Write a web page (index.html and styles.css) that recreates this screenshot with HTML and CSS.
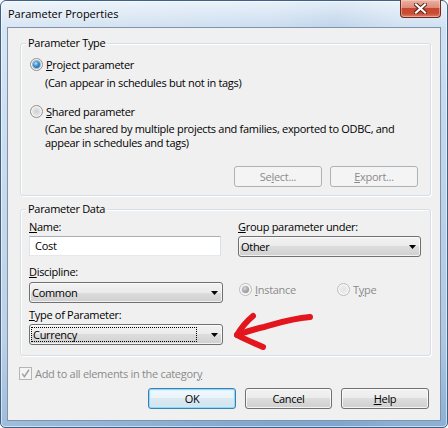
FILE: index.html
```html
<!DOCTYPE html>
<html lang="en">
<head>
<meta charset="utf-8">
<title>Parameter Properties</title>
<link rel="stylesheet" href="styles.css">
</head>
<body>
<div class="window">
  <div class="titlebar">
    <span class="title">Parameter Properties</span>
    <div class="close">
      <svg width="13" height="11" viewBox="0 0 13 11">
        <path d="M2 1.5 L11 9.5 M11 1.5 L2 9.5" stroke="#5a1d14" stroke-width="4" stroke-linecap="square"/>
        <path d="M2 1.5 L11 9.5 M11 1.5 L2 9.5" stroke="#ffffff" stroke-width="2.2" stroke-linecap="square"/>
      </svg>
    </div>
  </div>
  <div class="client">
    <div class="group g1">
      <div class="legend">Parameter Type</div>
      <div class="opt-row first">
        <span class="radio checked"></span><span><u>P</u>roject parameter</span>
      </div>
      <div class="note n1">(Can appear in schedules but not in tags)</div>
      <div class="opt-row second">
        <span class="radio"></span><span><u>S</u>hared parameter</span>
      </div>
      <div class="note n2">(Can be shared by multiple projects and families, exported to ODBC, and<br>appear in schedules and tags)</div>
      <div class="btn-row">
        <button class="btn" disabled>Se<u>l</u>ect...</button>
        <button class="btn" disabled><u>E</u>xport...</button>
      </div>
    </div>

    <div class="group g2">
      <div class="legend">Parameter Data</div>
      <div class="field-row r1">
        <div class="field">
          <div class="lbl"><u>N</u>ame:</div>
          <div class="input">Cost</div>
        </div>
        <div class="field right">
          <div class="lbl"><u>G</u>roup parameter under:</div>
          <div class="combo"><span class="combo-text">Other</span><svg class="drop" width="7" height="4" viewBox="0 0 7 4"><path d="M0 0H7L3.5 4Z" fill="#000"/></svg></div>
        </div>
      </div>
      <div class="field-row r2">
        <div class="field">
          <div class="lbl lbl2"><u>D</u>iscipline:</div>
          <div class="combo"><span class="combo-text">Common</span><svg class="drop" width="7" height="4" viewBox="0 0 7 4"><path d="M0 0H7L3.5 4Z" fill="#000"/></svg></div>
        </div>
        <div class="field right radios">
          <div class="dis-opt inst"><span class="radio disabled checked"></span><span><u>I</u>nstance</span></div>
          <div class="dis-opt"><span class="radio disabled"></span><span>T<u>y</u>pe</span></div>
        </div>
      </div>
      <div class="field-row r3">
        <div class="field">
          <div class="lbl"><u>T</u>ype of Parameter:</div>
          <div class="combo focused"><span class="combo-text focus">Currency</span><svg class="drop" width="7" height="4" viewBox="0 0 7 4"><path d="M0 0H7L3.5 4Z" fill="#000"/></svg></div>
        </div>
      </div>
    </div>

    <div class="check-row">
      <span class="checkbox"><svg width="11" height="11" viewBox="0 0 11 11"><path d="M2.2 5.6 L4.4 8.6 L9 1.8" fill="none" stroke="#a4a4a4" stroke-width="1.6"/></svg></span>
      <span>Add to all elements in the categor<u>y</u></span>
    </div>

    <div class="actions">
      <button class="btn default">OK</button>
      <button class="btn">Cancel</button>
      <button class="btn"><u>H</u>elp</button>
    </div>

    <svg class="annot" width="90" height="46" viewBox="0 0 90 46">
      <path d="M7 26 C 16 23, 24 20, 34 18 C 46 15, 58 10, 80 8" fill="none" stroke="#e3161d" stroke-width="6" stroke-linecap="round" stroke-linejoin="round"/>
      <path d="M23 7 C 17 12, 11 19, 7 26 C 14 30, 24 34, 33 38" fill="none" stroke="#e3161d" stroke-width="6" stroke-linecap="round" stroke-linejoin="round"/>
    </svg>
  </div>
</div>
</body>
</html>
```

FILE: styles.css
```css
* { box-sizing: border-box; }

html, body {
  margin: 0;
  padding: 0;
}

body {
  width: 448px;
  height: 428px;
  overflow: hidden;
  font-family: "Open Sans", "Noto Sans", sans-serif;
  font-size: 11px;
  letter-spacing: -0.3px;
  color: #000;
  background: #ffffff;
}

.window {
  width: 448px;
  height: 428px;
  border: 1px solid #3f6187;
  border-radius: 6px 6px 5px 5px;
  padding: 0 6px 6px;
  display: flex;
  flex-direction: column;
  background:
    linear-gradient(180deg, rgba(255,255,255,0.55) 0, rgba(255,255,255,0) 27px),
    linear-gradient(90deg, rgba(255,255,255,0.25) 0, rgba(255,255,255,0) 60%, rgba(120,160,210,0.15) 75%, rgba(255,255,255,0.1) 90%),
    linear-gradient(180deg, #cfe0f1 0%, #bcd3ea 30%, #a5c1de 80%, #7ea6cf 100%);
  box-shadow: inset 0 0 0 1px rgba(255,255,255,0.55);
}

.titlebar {
  height: 26px;
  flex: none;
  display: flex;
  align-items: flex-start;
  justify-content: space-between;
}

.title {
  margin-top: 6px;
  padding-left: 1px;
  line-height: 14px;
  font-size: 11px;
  letter-spacing: 0;
  text-shadow: 0 0 6px rgba(255,255,255,0.9);
}

.close {
  width: 41px;
  height: 18px;
  margin-top: -1px;
  border: 1px solid #6b2a20;
  border-top: none;
  border-radius: 0 0 4px 4px;
  display: flex;
  align-items: center;
  justify-content: center;
  background: linear-gradient(180deg, #eab2a5 0%, #de8b78 45%, #c8452e 50%, #c94f36 80%, #de8266 100%);
  box-shadow: inset 0 0 0 1px rgba(255,220,210,0.45);
}

.client {
  flex: 1;
  position: relative;
  border: 1px solid #8193ab;
  background: #f0f0f0;
  padding: 0 9px 0 12px;
  display: flex;
  flex-direction: column;
}

.group {
  border: 1px solid #d5dfe5;
  border-radius: 3px;
  box-shadow: inset 1px 1px 0 #fff, 1px 1px 0 #fff;
  display: flex;
  flex-direction: column;
}

.legend {
  align-self: flex-start;
  background: #f0f0f0;
  line-height: 14px;
  padding: 0 2px;
  margin-top: -8px;
}

.g1 {
  margin-top: 15px;
  padding: 0 12px 8px 9px;
}

.g1 .legend { margin-left: -4px; }

.opt-row {
  display: flex;
  align-items: center;
  height: 16px;
}

.opt-row.first { margin-top: 6px; }
.opt-row.second { margin-top: 13px; }

.opt-row .radio { margin-right: 3px; }

.note {
  line-height: 14px;
  padding-left: 15px;
}

.n1 { margin-top: 4px; }
.n2 { margin-top: 3px; }

.btn-row {
  margin-top: 16px;
  display: flex;
  justify-content: flex-end;
  gap: 8px;
}

.btn-row .btn { width: 88px; }

.btn {
  height: 21px;
  padding: 0;
  font: inherit;
  font-size: 11px;
  letter-spacing: -0.3px;
  color: #000;
  border: 1px solid #707070;
  border-radius: 3px;
  background: linear-gradient(180deg, #f2f2f2 0%, #ebebeb 50%, #dddddd 50%, #cfcfcf 100%);
  box-shadow: inset 0 0 0 1px rgba(255,255,255,0.75);
  text-align: center;
}

.btn:disabled {
  color: #8b8b8b;
  border-color: #adb2b5;
  background: #f4f4f4;
  box-shadow: none;
}

.btn.default {
  border-color: #3c7fb1;
  background: linear-gradient(180deg, #f3f9fd 0%, #eaf3f9 50%, #dbe9f2 50%, #d2e3ee 100%);
  box-shadow: inset 0 0 0 1px #8fd8f6, inset 0 0 0 2px rgba(200,240,255,0.6);
}

.g2 {
  margin-top: 13px;
  padding: 0 9px 10px 8px;
}

.g2 .legend { margin-left: -3px; }

.field-row {
  display: flex;
  column-gap: 15px;
}

.r1 { margin-top: 4px; }
.r2 { margin-top: 8px; }
.r3 { margin-top: 5px; }

.field {
  width: 194px;
  display: flex;
  flex-direction: column;
}

.field.right { width: 183px; }

.lbl {
  line-height: 14px;
  margin-bottom: 2px;
}

.lbl2 { margin-bottom: 3px; }

.input {
  width: 192px;
  height: 20px;
  border: 1px solid;
  border-color: #abadb3 #dbdfe6 #e3e9ef #e2e3ea;
  background: #fff;
  padding-left: 5px;
  line-height: 18px;
}

.combo {
  height: 21px;
  border: 1px solid #707070;
  border-radius: 3px;
  background: linear-gradient(180deg, #f2f2f2 0%, #ebebeb 50%, #dddddd 50%, #cfcfcf 100%);
  box-shadow: inset 0 0 0 1px rgba(255,255,255,0.7);
  display: flex;
  align-items: center;
  padding-left: 2px;
}

.combo-text {
  flex: 1;
  line-height: 15px;
}

.drop {
  flex: none;
  margin: 0 4px 0 4px;
}

.combo.focused { padding-left: 1px; }

.combo-text.focus {
  border: 1px dotted #000;
  padding-left: 1px;
  line-height: 13px;
  margin-right: 10px;
}

.radios {
  flex-direction: row;
  align-items: center;
  padding-top: 16px;
  align-self: flex-start;
}

.dis-opt {
  display: flex;
  align-items: center;
  height: 16px;
  color: #8b8b8b;
}

.dis-opt.inst {
  width: 98px;
  margin-left: 1px;
}

.dis-opt .radio { margin-right: 3px; }

.radio {
  width: 13px;
  height: 13px;
  flex: none;
  border-radius: 50%;
  border: 1px solid #8e8f8f;
  background: radial-gradient(circle at 50% 50%, #d0d0d0 0, #e6e6e6 55%, #f8f8f8 100%);
  box-shadow: inset 0 0 0 1px rgba(255,255,255,0.6);
  display: flex;
  align-items: center;
  justify-content: center;
}

.radio.checked::after {
  content: "";
  width: 7px;
  height: 7px;
  border-radius: 50%;
  background: radial-gradient(circle at 40% 35%, #b6e6fb 0, #3e95d6 40%, #114f8f 100%);
  box-shadow: 0 0 0 1px rgba(30,80,140,0.35);
}

.radio.disabled {
  border-color: #bcbcbc;
  background: radial-gradient(circle at 50% 50%, #e4e4e4 0, #ededed 55%, #f7f7f7 100%);
}

.radio.disabled.checked::after {
  background: radial-gradient(circle at 40% 35%, #d8d8d8 0, #a2a2a2 55%, #8a8a8a 100%);
  box-shadow: none;
}

.check-row {
  margin-top: 10px;
  display: flex;
  align-items: center;
  height: 14px;
  color: #8b8b8b;
}

.checkbox {
  width: 13px;
  height: 13px;
  margin-left: -1px;
  margin-right: 3px;
  border: 1px solid #b5b5b5;
  background: #f4f4f4;
  display: flex;
  align-items: center;
  justify-content: center;
  flex: none;
}

.actions {
  margin-top: 8px;
  margin-right: 2px;
  display: flex;
  justify-content: flex-end;
  gap: 9px;
}

.actions .btn { width: 87px; }
.actions .btn.default { width: 88px; }
.actions .btn:last-child { width: 88px; }

.annot {
  position: absolute;
  left: 222px;
  top: 281px;
  pointer-events: none;
}
```
